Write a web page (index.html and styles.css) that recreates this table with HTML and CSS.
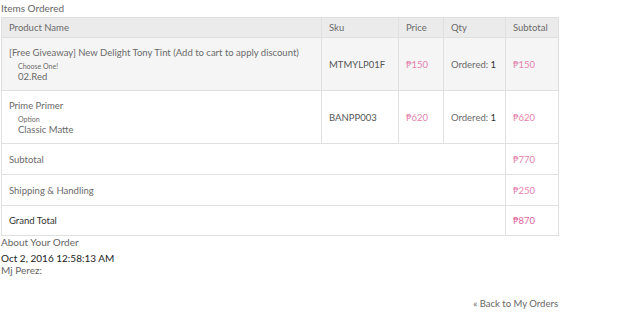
FILE: index.html
```html
<!DOCTYPE html>
<html>
<head>
<meta charset="utf-8">
<link rel="stylesheet" href="styles.css">
</head>
<body>
<div class="page">
  <div class="section-title">Items Ordered</div>
  <table class="items">
    <colgroup>
      <col class="c-name"><col class="c-sku"><col class="c-price"><col class="c-qty"><col class="c-sub">
    </colgroup>
    <thead>
      <tr class="head-row">
        <th>Product Name</th><th>Sku</th><th>Price</th><th>Qty</th><th>Subtotal</th>
      </tr>
    </thead>
    <tbody>
      <tr class="item-row odd">
        <td>
          <div class="prod-name">[Free Giveaway] New Delight Tony Tint (Add to cart to apply discount)</div>
          <div class="opt-label">Choose One!</div>
          <div class="opt-value">02.Red</div>
        </td>
        <td class="sku">MTMYLP01F</td>
        <td class="money">₱150</td>
        <td>Ordered: <span class="qty">1</span></td>
        <td class="money">₱150</td>
      </tr>
      <tr class="item-row">
        <td>
          <div class="prod-name">Prime Primer</div>
          <div class="opt-label">Option</div>
          <div class="opt-value">Classic Matte</div>
        </td>
        <td class="sku">BANPP003</td>
        <td class="money">₱620</td>
        <td>Ordered: <span class="qty">1</span></td>
        <td class="money">₱620</td>
      </tr>
    </tbody>
    <tfoot>
      <tr class="sum-row">
        <td colspan="4">Subtotal</td><td class="money">₱770</td>
      </tr>
      <tr class="sum-row">
        <td colspan="4">Shipping &amp; Handling</td><td class="money">₱250</td>
      </tr>
      <tr class="sum-row grand">
        <td colspan="4" class="grand-label">Grand Total</td><td class="money">₱870</td>
      </tr>
    </tfoot>
  </table>
  <div class="section-title about">About Your Order</div>
  <div class="order-date">Oct 2, 2016 12:58:13 AM</div>
  <div class="order-author">Mj Perez:</div>
  <div class="back-wrap"><a class="back-link" href="#">« Back to My Orders</a></div>
</div>
</body>
</html>
```
FILE: styles.css
```css
html, body {
  margin: 0;
  padding: 0;
  background: #fff;
}

body {
  font-family: "Lato", "Open Sans", sans-serif;
  font-size: 10px;
  color: #666;
}

.page {
  width: 557px;
  padding: 0 0 0 1px;
}

.section-title {
  font-size: 10px;
  line-height: 14px;
  height: 17px;
  padding-top: 1px;
  box-sizing: border-box;
  color: #666;
}

.items {
  width: 557px;
  border-collapse: collapse;
  table-layout: fixed;
  border: 1px solid #e0e0e0;
}

.c-name { width: 320px; }
.c-sku { width: 77px; }
.c-price { width: 45px; }
.c-qty { width: 62px; }
.c-sub { width: 53px; }

.items th,
.items td {
  border: 1px solid #e0e0e0;
  text-align: left;
  vertical-align: middle;
  padding: 0 7px;
  font-weight: normal;
  color: #6a6a6a;
  font-size: 9.5px;
}

.head-row {
  height: 20px;
  background: #ebebeb;
}

.item-row {
  height: 53px;
}

.item-row.odd {
  background: #f5f5f5;
}

.prod-name {
  line-height: 12px;
}

.opt-label {
  font-size: 7px;
  line-height: 9px;
  margin-top: 3px;
  padding-left: 9px;
}

.opt-value {
  padding-left: 9px;
  line-height: 11px;
}

.items .sku {
  color: #555;
}

.items .money {
  color: #e583ae;
}

.qty {
  color: #333;
}

.sum-row {
  height: 31px;
}

.sum-row.grand {
  height: 30px;
}

.items .grand-label {
  color: #333;
}

.items .grand .money {
  color: #e0649c;
}

.about {
  height: auto;
  padding-top: 0;
  line-height: 13px;
}

.order-date {
  color: #222;
  font-size: 10px;
  line-height: 12px;
  margin-top: 3px;
}

.order-author {
  line-height: 12px;
}

.back-wrap {
  display: flex;
  justify-content: flex-end;
  margin-top: 22px;
}

.back-link {
  color: #666;
  text-decoration: none;
  font-size: 9.5px;
}
```
